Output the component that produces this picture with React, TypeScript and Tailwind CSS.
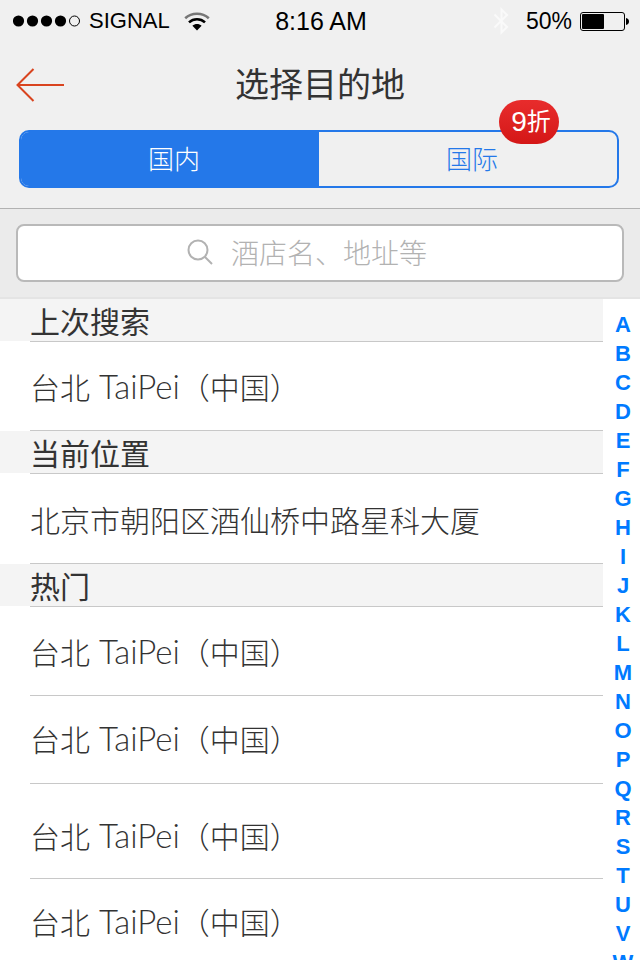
import { useState } from "react";

const latin = "font-['Liberation_Sans','Noto_Sans_CJK_SC',sans-serif]";
const cjk = "font-['Noto_Sans_CJK_SC',sans-serif]";

const letters = "ABCDEFGHIJKLMNOPQRSTUVWXYZ".split("");

type Place = { city: string; pinyin?: string; country?: string; size: string };

const sections: { title: string; rows: Place[] }[] = [
  { title: "上次搜索", rows: [{ city: "台北", pinyin: "TaiPei", country: "（中国）", size: "h-[89px]" }] },
  { title: "当前位置", rows: [{ city: "北京市朝阳区酒仙桥中路星科大厦", size: "h-[90px]" }] },
  {
    title: "热门",
    rows: [
      { city: "台北", pinyin: "TaiPei", country: "（中国）", size: "h-[89px]" },
      { city: "台北", pinyin: "TaiPei", country: "（中国）", size: "h-[88px] pb-1" },
      { city: "台北", pinyin: "TaiPei", country: "（中国）", size: "h-[95px] pt-2" },
      { city: "台北", pinyin: "TaiPei", country: "（中国）", size: "h-[88px] pb-1" },
    ],
  },
];

function StatusBar() {
  return (
    <div className={`grid h-10 grid-cols-[1fr_auto_1fr] items-center pt-[2px] pr-[11px] pl-[13px] text-black ${latin}`}>
      <div className="flex items-center">
        <svg width="68" height="12" viewBox="0 0 68 12" aria-hidden="true">
          <circle cx="5.5" cy="6" r="5.6" />
          <circle cx="19.5" cy="6" r="5.6" />
          <circle cx="33.5" cy="6" r="5.6" />
          <circle cx="47.5" cy="6" r="5.6" />
          <circle cx="61.5" cy="6" r="5" fill="none" stroke="#000" strokeWidth="1" />
        </svg>
        <span className="ml-2 text-[22px] leading-[38px]">SIGNAL</span>
        <svg className="ml-[14px]" width="26" height="19" viewBox="0 0 26 19" fill="none" aria-hidden="true">
          <path d="M1.2 6.2C7.8 0.2 18.2 0.2 24.8 6.2" stroke="#777" strokeWidth="2.6" />
          <path d="M5 10.4C9.6 6.2 16.4 6.2 21 10.4" stroke="#000" strokeWidth="2.6" />
          <path d="M8.4 13.8C11 11.4 15 11.4 17.6 13.8L13 18.4Z" fill="#000" />
        </svg>
      </div>
      <span className="text-[25px] leading-[38px]">8:16 AM</span>
      <div className="flex items-center justify-end">
        <svg width="16" height="28" viewBox="0 0 16 28" fill="none" stroke="#fafafa" strokeWidth="2" aria-hidden="true">
          <path d="M1.5 7.5L14 20L8.5 25.5V2.5L14 8L1.5 20.5" />
        </svg>
        <span className="ml-[17px] text-[23px] leading-[38px]">50%</span>
        <svg className="ml-2" width="49" height="19" viewBox="0 0 49 19" aria-hidden="true">
          <rect x="0.5" y="0.5" width="44" height="18" rx="2.5" fill="none" stroke="#000" />
          <rect x="2" y="2" width="22" height="15" rx="1" />
          <path d="M46 6C50 6.5 50 12.5 46 13Z" />
        </svg>
      </div>
    </div>
  );
}

export default function App() {
  const [tab, setTab] = useState("domestic");
  const active = "bg-[#2478e9] text-white pl-2 pb-1";
  const idle = "text-[#2478e9] pl-2 pb-1";

  return (
    <div className={`flex h-screen flex-col overflow-hidden bg-white text-[#333] ${cjk}`}>
      <header className="shrink-0 border-b border-[#b2b2b2] bg-[#f0f0f0] pb-5">
        <StatusBar />
        <div className="grid h-[90px] grid-cols-[48px_1fr_48px] items-center px-4">
          <button type="button" aria-label="返回">
            <svg width="48" height="34" viewBox="0 0 48 34" fill="none" stroke="#d9441f" strokeWidth="2" aria-hidden="true">
              <path d="M17.5 1L1.5 17L17.5 33M1.5 17H48" />
            </svg>
          </button>
          <h1 className="pb-1 text-center text-[34px] leading-[50px] font-normal">选择目的地</h1>
        </div>
        <div className="relative mr-[21px] ml-[19px]">
          <div role="tablist" className="grid h-[58px] grid-cols-2 overflow-hidden rounded-[10px] border-2 border-[#2478e9] text-[26px] font-light">
            <button type="button" role="tab" aria-selected={tab === "domestic"} onClick={() => setTab("domestic")} className={tab === "domestic" ? active : idle}>
              国内
            </button>
            <button type="button" role="tab" aria-selected={tab === "abroad"} onClick={() => setTab("abroad")} className={tab === "abroad" ? active : idle}>
              国际
            </button>
          </div>
          <span className={`absolute -top-[30px] right-[60px] flex h-11 w-[60px] items-center justify-center rounded-full bg-linear-to-b from-[#e82c2c] to-[#d41616] pl-1 text-2xl leading-none text-white ${latin}`}>
            <span className="text-[28px]">9</span>折
          </span>
        </div>
      </header>

      <div className="shrink-0 border-b-2 border-[#e4e4e4] bg-[#ebebeb] px-4 pt-[15px] pb-[15px]">
        <label className="flex h-[58px] items-center justify-center gap-[18px] rounded-lg border-2 border-[#b9b9b9] bg-white pb-[2px] pl-[2px]">
          <svg width="26" height="26" viewBox="0 0 26 26" fill="none" stroke="#b2b2b2" strokeWidth="2" aria-hidden="true">
            <circle cx="11" cy="11" r="9.5" />
            <path d="M17.5 17.5L25 25" />
          </svg>
          <input type="text" aria-label="搜索" placeholder="酒店名、地址等" className="h-12 w-56 bg-transparent text-[28px] font-light outline-none placeholder:text-[#b2b2b2]" />
        </label>
      </div>

      <div className="flex min-h-0 flex-1">
        <main className="min-w-0 flex-1 overflow-hidden">
          {sections.map((section) => (
            <section key={section.title}>
              <h2 className="h-[42px] bg-[#f4f4f4] pl-[30px] text-[30px] leading-[42px] font-normal">{section.title}</h2>
              <ul className="ml-[30px] border-t border-[#c8c8c8]">
                {section.rows.map((row, i) => (
                  <li key={i} className={`flex items-center border-b border-[#c8c8c8] text-[30px] font-light whitespace-nowrap ${row.size}`}>
                    <p className="leading-10">
                      {row.city}
                      {row.pinyin && <span className="font-['Lato',sans-serif] text-[33px] leading-none"> {row.pinyin}</span>}
                      {row.country}
                    </p>
                  </li>
                ))}
              </ul>
            </section>
          ))}
        </main>
        <nav aria-label="字母索引" className={`flex w-[37px] shrink-0 flex-col items-center overflow-hidden pt-[11px] pl-[3px] text-[22px] font-bold text-[#007aff] ${latin}`}>
          {letters.map((letter) => (
            <a key={letter} href={`#${letter}`} className="shrink-0 leading-[29px]">
              {letter}
            </a>
          ))}
        </nav>
      </div>
    </div>
  );
}
